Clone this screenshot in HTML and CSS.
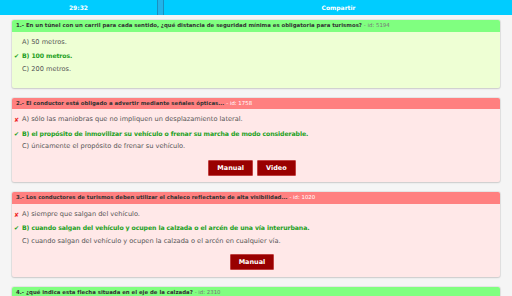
FILE: index.html
```html
<!DOCTYPE html>
<html lang="es">
<head>
    <meta charset="UTF-8">
    <meta name="viewport" content="width=device-width, initial-scale=1.0">
    <title>Test</title>
    <link rel="stylesheet" href="styles.css">
</head>
<body>
    <div class="topbar">
        <div class="topbar-item">29:32</div>
        <div class="divider"></div>
        <div class="topbar-item">Compartir</div>
    </div>

    <div class="question ok">
        <div class="q-header">1.- En un túnel con un carril para cada sentido, ¿qué distancia de seguridad mínima es obligatoria para turismos? <span class="q-id">- id: 5194</span></div>
        <div class="q-body">
            <ul class="answers">
                <li>A) 50 metros.</li>
                <li class="right"><span class="mark">✔</span>B) 100 metros.</li>
                <li>C) 200 metros.</li>
            </ul>
        </div>
    </div>

    <div class="question fail">
        <div class="q-header">2.- El conductor está obligado a advertir mediante señales ópticas... <span class="q-id">- id: 1758</span></div>
        <div class="q-body">
            <ul class="answers">
                <li class="wrong"><span class="mark">✘</span>A) sólo las maniobras que no impliquen un desplazamiento lateral.</li>
                <li class="right"><span class="mark">✔</span>B) el propósito de inmovilizar su vehículo o frenar su marcha de modo considerable.</li>
                <li>C) únicamente el propósito de frenar su vehículo.</li>
            </ul>
            <div class="buttons">
                <button class="btn">Manual</button>
                <button class="btn">Video</button>
            </div>
        </div>
    </div>

    <div class="question fail">
        <div class="q-header">3.- Los conductores de turismos deben utilizar el chaleco reflectante de alta visibilidad... <span class="q-id">- id: 1020</span></div>
        <div class="q-body">
            <ul class="answers">
                <li class="wrong"><span class="mark">✘</span>A) siempre que salgan del vehículo.</li>
                <li class="right"><span class="mark">✔</span>B) cuando salgan del vehículo y ocupen la calzada o el arcén de una vía interurbana.</li>
                <li>C) cuando salgan del vehículo y ocupen la calzada o el arcén en cualquier vía.</li>
            </ul>
            <div class="buttons">
                <button class="btn">Manual</button>
            </div>
        </div>
    </div>

    <div class="question ok">
        <div class="q-header">4.- ¿qué indica esta flecha situada en el eje de la calzada? <span class="q-id">- id: 2310</span></div>
    </div>
</body>
</html>
```

FILE: styles.css
```css
body { margin: 0; background: #f5f5f5; font-family: "DejaVu Sans", Verdana, sans-serif; font-size: 6.6px; color: #555; overflow: hidden; }

.topbar { display: flex; height: 15px; background: #00ccff; color: #fff; font-weight: bold; font-size: 6px; }
.topbar-item { flex: 1; display: flex; align-items: center; justify-content: center; }
.topbar-item:first-child { flex: 0 0 157px; }
.divider { width: 5px; border-left: 1px solid #1a8fc0; border-right: 1px solid #1a8fc0; background: #22b4ea; margin-right: 1px; }
.topbar + .question { margin-top: 5px; }

.question { margin: 0 12px 10px; border-radius: 2px; box-shadow: 0 0 0 1px rgba(0,0,0,0.06), 0 1px 2px rgba(0,0,0,0.12); overflow: hidden; }
.q-header { height: 11.5px; line-height: 11.5px; padding: 0 4px; font-size: 5.4px; font-weight: bold; color: #333; white-space: nowrap; overflow: hidden; }
.q-id { font-weight: normal; color: #777; }

.ok { background: #eeffd4; }
.ok .q-header { background: #80ff80; }
.fail { background: #ffe8e8; }
.fail .q-header { background: #ff8080; }
.fail .q-id { color: #fff; }

.q-body { padding: 4px 10px 5.5px 2px; }
.answers { list-style: none; margin: 0 0 6px; padding: 0; }
.answers li { position: relative; line-height: 13.5px; padding-left: 8px; white-space: nowrap; }
.answers .right { color: #22a022; font-weight: bold; font-size: 6.2px; letter-spacing: -0.1px; }
.mark { position: absolute; left: 0; font-size: 6px; letter-spacing: 0; }
.wrong .mark { color: #ee2222; }
.right .mark { color: #22a022; }

.buttons { display: flex; justify-content: center; gap: 4px; margin-bottom: 1px; }
.btn { height: 16px; padding: 0 8px; background: #990000; color: #fff; border: 1px solid #c04040; border-radius: 1px; font-family: "DejaVu Sans", Verdana, sans-serif; font-size: 6.5px; font-weight: bold; }
```
